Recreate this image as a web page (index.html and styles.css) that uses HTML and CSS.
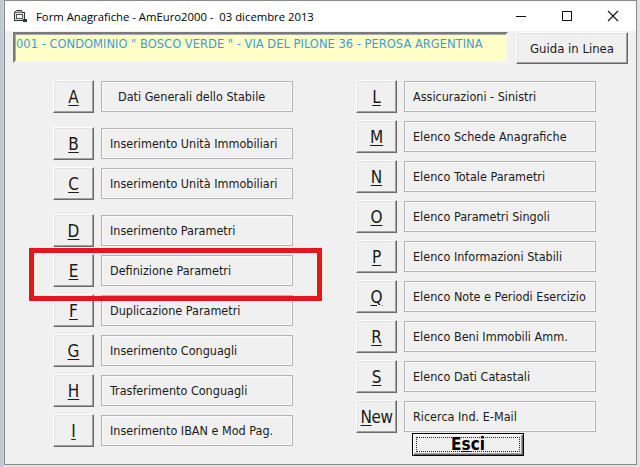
FILE: index.html
```html
<!DOCTYPE html>
<html lang="it">
<head>
    <meta charset="UTF-8">
    <title>Form Anagrafiche</title>
    <link rel="stylesheet" href="styles.css">
</head>
<body>
    <div class="window">
        <div class="titlebar">
            <svg class="app-icon" width="13" height="12" viewBox="0 0 13 12">
                <rect x="0.5" y="2.5" width="10" height="8" fill="#cfe8e0" stroke="#333"/>
                <path d="M0.5 2.5 L2.5 0.5 L7.5 0.5 L8.5 2.5" fill="#9fd3c0" stroke="#333"/>
                <rect x="2.5" y="4.5" width="6" height="4" fill="#fff" stroke="#555"/>
                <rect x="9" y="9" width="4" height="3" fill="#333"/>
            </svg>
            <span class="title">Form Anagrafiche - AmEuro2000 -  03 dicembre 2013</span>
            <div class="controls">
                <svg width="12" height="12" viewBox="0 0 12 12"><path d="M1 6.5 H11" stroke="#111" stroke-width="1"/></svg>
                <svg width="12" height="12" viewBox="0 0 12 12"><rect x="1.5" y="1.5" width="9" height="9" fill="none" stroke="#111"/></svg>
                <svg width="12" height="12" viewBox="0 0 12 12"><path d="M1 1 L11 11 M11 1 L1 11" stroke="#111" stroke-width="1.1"/></svg>
            </div>
        </div>

        <div class="top-row">
            <div class="address">001 - CONDOMINIO " BOSCO VERDE " - VIA DEL PILONE 36 - PEROSA ARGENTINA</div>
            <button class="btn guida">Guida in Linea</button>
        </div>

        <div class="menu">
            <div class="column">
                <div class="row"><button class="btn key"><u>A</u></button><div class="label label-wide">Dati Generali dello Stabile</div></div>
                <div class="row group"><button class="btn key"><u>B</u></button><div class="label">Inserimento Unità Immobiliari</div></div>
                <div class="row"><button class="btn key"><u>C</u></button><div class="label">Inserimento Unità Immobiliari</div></div>
                <div class="row group"><button class="btn key"><u>D</u></button><div class="label">Inserimento Parametri</div></div>
                <div class="row"><button class="btn key"><u>E</u></button><div class="label">Definizione Parametri</div></div>
                <div class="row"><button class="btn key"><u>F</u></button><div class="label">Duplicazione Parametri</div></div>
                <div class="row"><button class="btn key"><u>G</u></button><div class="label">Inserimento Conguagli</div></div>
                <div class="row"><button class="btn key"><u>H</u></button><div class="label">Trasferimento Conguagli</div></div>
                <div class="row"><button class="btn key"><u>I</u></button><div class="label">Inserimento IBAN e Mod Pag.</div></div>
            </div>
            <div class="column">
                <div class="row"><button class="btn key"><u>L</u></button><div class="label">Assicurazioni - Sinistri</div></div>
                <div class="row"><button class="btn key"><u>M</u></button><div class="label">Elenco Schede Anagrafiche</div></div>
                <div class="row"><button class="btn key"><u>N</u></button><div class="label">Elenco Totale Parametri</div></div>
                <div class="row"><button class="btn key"><u>O</u></button><div class="label">Elenco Parametri Singoli</div></div>
                <div class="row"><button class="btn key"><u>P</u></button><div class="label">Elenco Informazioni Stabili</div></div>
                <div class="row"><button class="btn key"><u>Q</u></button><div class="label">Elenco Note e Periodi Esercizio</div></div>
                <div class="row"><button class="btn key"><u>R</u></button><div class="label">Elenco Beni Immobili Amm.</div></div>
                <div class="row"><button class="btn key"><u>S</u></button><div class="label">Elenco Dati Catastali</div></div>
                <div class="row"><button class="btn key key-new"><u>N</u>ew</button><div class="label">Ricerca Ind. E-Mail</div></div>
                <button class="btn esci"><span>E<u>s</u>ci</span></button>
            </div>
        </div>

        <div class="highlight"></div>
    </div>
</body>
</html>
```

FILE: styles.css
```css
* {
    margin: 0;
    padding: 0;
    box-sizing: border-box;
}

body {
    width: 640px;
    height: 467px;
    overflow: hidden;
    background: linear-gradient(90deg, #b8c4cf 0, #c9d3da 4px, #e3e3e3 4px);
    font-family: "DejaVu Sans Condensed", "DejaVu Sans", sans-serif;
    font-stretch: condensed;
    color: #1a1a1a;
}

.window {
    position: relative;
    margin-left: 4px;
    width: 633px;
    height: 465px;
    background: #f0f0f0;
    border: 1px solid #8a8a8a;
    display: flex;
    flex-direction: column;
}

.titlebar {
    height: 30px;
    background: #fff;
    display: flex;
    align-items: center;
    padding-left: 9px;
}

.app-icon {
    margin-right: 9px;
}

.title {
    font-family: "Open Sans", "Noto Sans", sans-serif;
    font-stretch: normal;
    font-size: 11.3px;
    color: #000;
    white-space: pre;
}

.controls {
    margin-left: auto;
    display: flex;
    gap: 34px;
    padding-right: 17px;
}

.top-row {
    display: flex;
    gap: 8px;
    margin-top: 1px;
    padding-left: 8px;
}

.address {
    width: 495px;
    height: 31px;
    background: #ffffc8;
    border: 2px solid;
    border-color: #7a7a7a #f4f4f4 #f4f4f4 #7a7a7a;
    box-shadow: inset 1px 1px #a9a9a9;
    color: #3f9bd6;
    font-size: 12.8px;
    padding: 2px 0 0 1px;
    white-space: nowrap;
    overflow: hidden;
}

.btn {
    background: #f0f0f0;
    border: 1px solid;
    border-color: #ffffff #6a6a6a #6a6a6a #ffffff;
    box-shadow: inset -1px -1px #a0a0a0, inset 1px 1px #e3e3e3;
    font-family: inherit;
    font-stretch: condensed;
    color: #1a1a1a;
    cursor: pointer;
}

.guida {
    width: 112px;
    height: 32px;
    font-size: 13px;
}

.menu {
    display: flex;
    gap: 63px;
    margin-top: 16px;
    padding-left: 48px;
}

.column {
    display: flex;
    flex-direction: column;
    gap: 7px;
}

.row {
    display: flex;
    align-items: center;
    gap: 7px;
}

.row.group {
    margin-top: 7px;
}

.key {
    width: 41px;
    height: 33px;
    font-size: 17px;
}

.key-new {
    letter-spacing: -0.5px;
}

.key u {
    text-underline-offset: 2px;
}

.label {
    width: 192px;
    height: 31px;
    border: 1px solid #b4b4b4;
    box-shadow: inset 1px 1px #fafafa, inset -1px -1px #fafafa;
    display: flex;
    align-items: center;
    padding-left: 8px;
    font-size: 12.5px;
    white-space: nowrap;
}

.label-wide {
    padding-left: 16px;
}

.esci {
    width: 112px;
    height: 23px;
    margin-top: -7px;
    margin-left: 56px;
    border: 1px solid #000;
    box-shadow: inset 1px 1px #fff, inset -1px -1px #6a6a6a, inset -2px -2px #a0a0a0;
    padding: 3px;
    font-size: 17px;
    font-weight: bold;
    color: #000;
}

.esci span {
    display: flex;
    align-items: center;
    justify-content: center;
    height: 100%;
    border: 1px dotted #222;
    line-height: 1;
}

.highlight {
    position: absolute;
    left: 24px;
    top: 247px;
    width: 293px;
    height: 53px;
    border: 5px solid #e1161e;
    pointer-events: none;
}
```
